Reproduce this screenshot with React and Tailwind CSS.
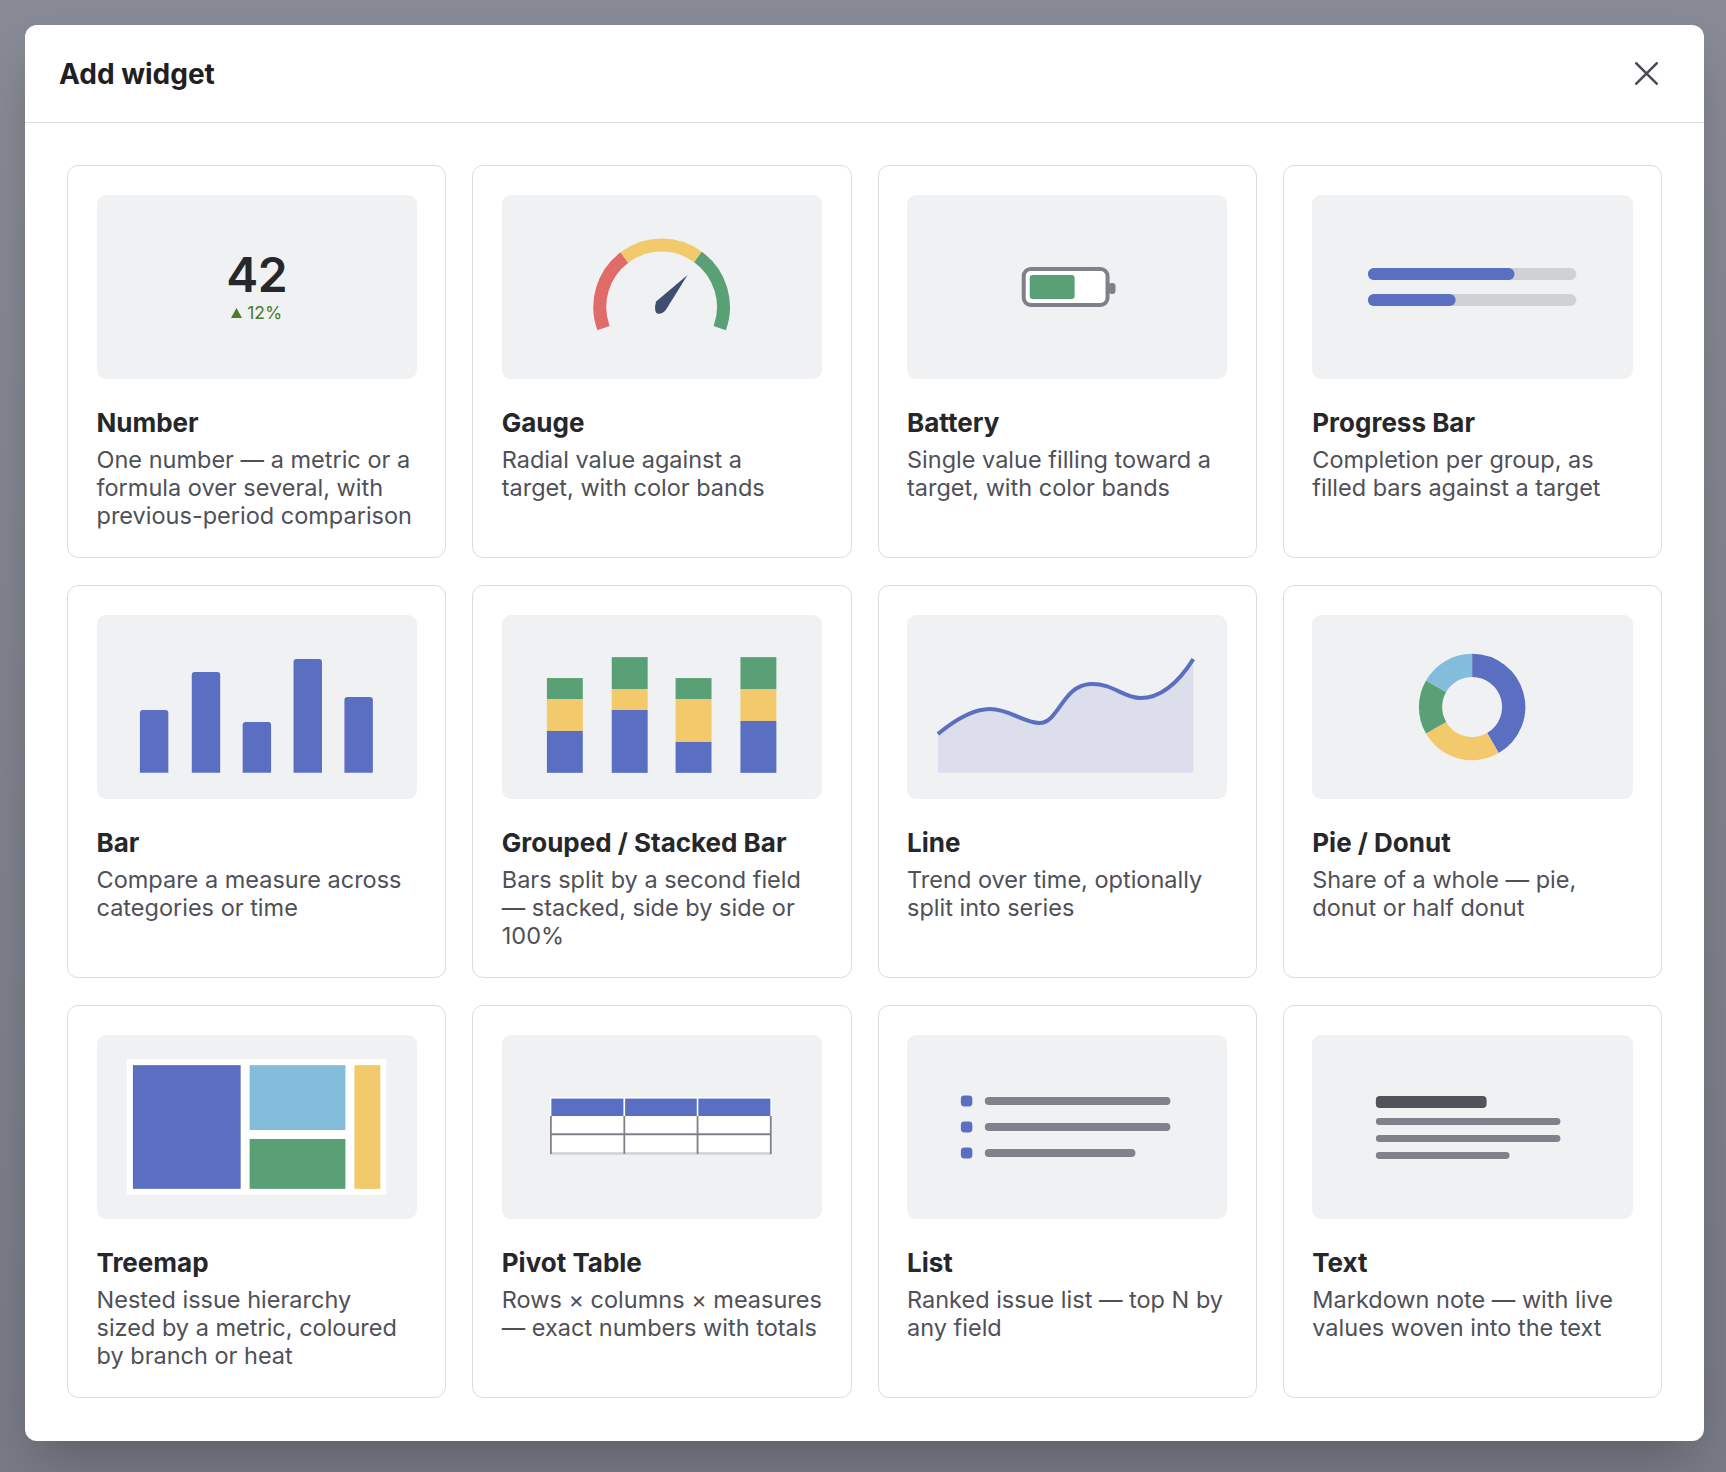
import { useState } from 'react'

const BLUE = '#5a6fc1'
const YELLOW = '#f2c96b'
const GREEN = '#5aa076'
const RED = '#e06c6a'
const SKY = '#84bddb'
const GRAY = '#80818b'

function polar(cx, cy, r, deg) {
  const a = (deg * Math.PI) / 180
  return [cx + r * Math.sin(a), cy - r * Math.cos(a)]
}

function arc(cx, cy, r, from, to) {
  const [x0, y0] = polar(cx, cy, r, from)
  const [x1, y1] = polar(cx, cy, r, to)
  const large = to - from > 180 ? 1 : 0
  return `M${x0.toFixed(2)} ${y0.toFixed(2)} A${r} ${r} 0 ${large} 1 ${x1.toFixed(2)} ${y1.toFixed(2)}`
}

function Canvas({ children }) {
  return (
    <svg viewBox="0 0 321 184" className="h-full w-full">
      {children}
    </svg>
  )
}

function NumberPreview() {
  return (
    <div className="flex h-full flex-col items-center justify-center">
      <div className="text-[48px] font-semibold leading-[48px] tracking-[-0.5px] text-[#26272b]">42</div>
      <div className="mt-[4px] flex items-center gap-[5px] text-[17.5px] leading-[20px] text-[#4e7a2c]">
        <svg width="11" height="10" viewBox="0 0 11 10">
          <path d="M5.5 0 L11 10 L0 10 Z" fill="#4e7a2c" />
        </svg>
        <span>12%</span>
      </div>
    </div>
  )
}

function GaugePreview() {
  const cx = 160
  const cy = 112
  return (
    <Canvas>
      <path d={arc(cx, cy, 62, -110, -37)} stroke={RED} strokeWidth="13" fill="none" />
      <path d={arc(cx, cy, 62, -37, 36)} stroke={YELLOW} strokeWidth="13" fill="none" />
      <path d={arc(cx, cy, 62, 36, 110)} stroke={GREEN} strokeWidth="13" fill="none" />
      <path d="M186 80 L164.5 114.5 Q160 120 155.5 118.5 Q153 117 153.5 111 L154.5 106.5 Z" fill="#3f4e6e" />
    </Canvas>
  )
}

function BatteryPreview() {
  return (
    <Canvas>
      <rect x="117" y="74" width="84" height="36" rx="7" fill="#ffffff" stroke="#7f8089" strokeWidth="4" />
      <rect x="123" y="80" width="45" height="24" rx="3" fill={GREEN} />
      <rect x="202" y="88" width="7" height="11" rx="3" fill="#7f8089" />
    </Canvas>
  )
}

function ProgressPreview() {
  return (
    <Canvas>
      <rect x="56" y="73" width="209" height="12" rx="6" fill="#d0d1d4" />
      <rect x="56" y="73" width="147" height="12" rx="6" fill={BLUE} />
      <rect x="56" y="99" width="209" height="12" rx="6" fill="#d0d1d4" />
      <rect x="56" y="99" width="88" height="12" rx="6" fill={BLUE} />
    </Canvas>
  )
}

const BARS = [
  { x: 43, top: 95 },
  { x: 95, top: 57 },
  { x: 146, top: 107 },
  { x: 197, top: 44 },
  { x: 248, top: 82 },
]

function BarPreview() {
  return (
    <Canvas>
      {BARS.map((b) => (
        <path
          key={b.x}
          d={`M${b.x} 158 L${b.x} ${b.top + 3} Q${b.x} ${b.top} ${b.x + 3} ${b.top} L${b.x + 25.5} ${b.top} Q${b.x + 28.5} ${b.top} ${b.x + 28.5} ${b.top + 3} L${b.x + 28.5} 158 Z`}
          fill={BLUE}
        />
      ))}
    </Canvas>
  )
}

const STACKS = [
  { x: 45, g: 63, y: 84, b: 116 },
  { x: 110, g: 42, y: 74, b: 95 },
  { x: 174, g: 63, y: 84, b: 127 },
  { x: 239, g: 42, y: 74, b: 106 },
]

function StackedPreview() {
  return (
    <Canvas>
      {STACKS.map((s) => (
        <g key={s.x}>
          <rect x={s.x} y={s.g} width="36" height={s.y - s.g} fill={GREEN} />
          <rect x={s.x} y={s.y} width="36" height={s.b - s.y} fill={YELLOW} />
          <rect x={s.x} y={s.b} width="36" height={158 - s.b} fill={BLUE} />
        </g>
      ))}
    </Canvas>
  )
}

const LINE = 'M31 119 C48 105 66 94 83 94 C103 94 117 108 133 108 C152 108 156 70 184 69 C206 68 217 83 234 83 C256 83 273 66 287 44'

function LinePreview() {
  return (
    <Canvas>
      <path d={`${LINE} L287 158 L31 158 Z`} fill="#dcdfeb" />
      <path d={LINE} stroke={BLUE} strokeWidth="4" fill="none" />
    </Canvas>
  )
}

function DonutPreview() {
  const cx = 160.5
  const cy = 92
  const r = 41.7
  return (
    <Canvas>
      <path d={arc(cx, cy, r, 0, 150)} stroke={BLUE} strokeWidth="23.3" fill="none" />
      <path d={arc(cx, cy, r, 150, 240)} stroke={YELLOW} strokeWidth="23.3" fill="none" />
      <path d={arc(cx, cy, r, 240, 300)} stroke={GREEN} strokeWidth="23.3" fill="none" />
      <path d={arc(cx, cy, r, 300, 360)} stroke={SKY} strokeWidth="23.3" fill="none" />
    </Canvas>
  )
}

function TreemapPreview() {
  return (
    <Canvas>
      <rect x="30" y="24" width="260" height="136" fill="#ffffff" />
      <rect x="36" y="30" width="108" height="124" fill={BLUE} />
      <rect x="153" y="30" width="96" height="65" fill={SKY} />
      <rect x="153" y="104" width="96" height="50" fill={GREEN} />
      <rect x="258" y="30" width="26" height="124" fill={YELLOW} />
    </Canvas>
  )
}

function PivotPreview() {
  const cols = [49, 122.6, 196, 269.4]
  return (
    <Canvas>
      <rect x="49" y="81" width="220.4" height="38" fill="#ffffff" />
      <rect x="48" y="62" width="222.4" height="19.5" fill="#ffffff" />
      <rect x="49.5" y="63.5" width="72.2" height="17.5" fill={BLUE} />
      <rect x="123.4" y="63.5" width="71.8" height="17.5" fill={BLUE} />
      <rect x="196.8" y="63.5" width="72.2" height="17.5" fill={BLUE} />
      <line x1="48" y1="118.5" x2="270.4" y2="118.5" stroke="#d6d7da" strokeWidth="3" />
      <line x1="49" y1="99.3" x2="269.4" y2="99.3" stroke="#7f8089" strokeWidth="2" />
      {cols.map((x) => (
        <line key={x} x1={x} y1="81" x2={x} y2="119" stroke="#7f8089" strokeWidth="1.8" />
      ))}
    </Canvas>
  )
}

function ListPreview() {
  const rows = [
    { y: 66, w: 186 },
    { y: 92, w: 186 },
    { y: 118, w: 151 },
  ]
  return (
    <Canvas>
      {rows.map((r) => (
        <g key={r.y}>
          <rect x="54" y={r.y - 5.5} width="11.5" height="11" rx="3.5" fill={BLUE} />
          <rect x="78" y={r.y - 4} width={r.w} height="8" rx="4" fill={GRAY} />
        </g>
      ))}
    </Canvas>
  )
}

function TextPreview() {
  return (
    <Canvas>
      <rect x="64" y="61" width="111" height="12" rx="4" fill="#525359" />
      <rect x="64" y="83" width="185" height="7" rx="3.5" fill={GRAY} />
      <rect x="64" y="100" width="185" height="7" rx="3.5" fill={GRAY} />
      <rect x="64" y="117" width="134" height="7" rx="3.5" fill={GRAY} />
    </Canvas>
  )
}

// descriptions are kept as the lines they break into on the card
const WIDGETS = [
  { id: 'number', title: 'Number', desc: ['One number — a metric or a', 'formula over several, with', 'previous-period comparison'], Preview: NumberPreview },
  { id: 'gauge', title: 'Gauge', desc: ['Radial value against a', 'target, with color bands'], Preview: GaugePreview },
  { id: 'battery', title: 'Battery', desc: ['Single value filling toward a', 'target, with color bands'], Preview: BatteryPreview },
  { id: 'progress', title: 'Progress Bar', desc: ['Completion per group, as', 'filled bars against a target'], Preview: ProgressPreview },
  { id: 'bar', title: 'Bar', desc: ['Compare a measure across', 'categories or time'], Preview: BarPreview },
  { id: 'stacked', title: 'Grouped / Stacked Bar', desc: ['Bars split by a second field', '— stacked, side by side or', '100%'], Preview: StackedPreview },
  { id: 'line', title: 'Line', desc: ['Trend over time, optionally', 'split into series'], Preview: LinePreview },
  { id: 'pie', title: 'Pie / Donut', desc: ['Share of a whole — pie,', 'donut or half donut'], Preview: DonutPreview },
  { id: 'treemap', title: 'Treemap', desc: ['Nested issue hierarchy', 'sized by a metric, coloured', 'by branch or heat'], Preview: TreemapPreview },
  { id: 'pivot', title: 'Pivot Table', desc: ['Rows × columns × measures', '— exact numbers with totals'], Preview: PivotPreview },
  { id: 'list', title: 'List', desc: ['Ranked issue list — top N by', 'any field'], Preview: ListPreview },
  { id: 'text', title: 'Text', desc: ['Markdown note — with live', 'values woven into the text'], Preview: TextPreview },
]

function WidgetCard({ widget, onPick }) {
  const { Preview } = widget
  return (
    <button
      type="button"
      onClick={() => onPick(widget.id)}
      className="flex h-[393px] flex-col overflow-visible rounded-[11px] border-[1.5px] border-[#dcdcdf] bg-white p-[28.5px] text-left"
    >
      <div className="h-[184px] w-full shrink-0 rounded-[9px] bg-[#f0f1f3]">
        <Preview />
      </div>
      <div className="mt-[28px] shrink-0 text-[26px] font-bold leading-[32px] text-[#26272b]">{widget.title}</div>
      <p className="mt-[7px] shrink-0 text-[23.5px] leading-[28px] text-[#4f5058]">
        {widget.desc.map((line) => (
          <span key={line} className="block whitespace-nowrap">
            {line}
          </span>
        ))}
      </p>
    </button>
  )
}

export default function App() {
  const [picked, setPicked] = useState(null)

  return (
    <div className="h-[1472px] w-full bg-gradient-to-b from-[#888a95] to-[#787a86] pb-[31px] pl-[25px] pr-[22px] pt-[25px] font-[Inter,sans-serif]">
      <div className="rounded-[12px] bg-white shadow-2xl" data-picked={picked || ''}>
        <div className="flex h-[98px] items-center justify-between border-b-[1.5px] border-[#dddde0] pl-[34px] pr-[46px]">
          <h2 className="text-[28px] font-bold text-[#1f2024]">Add widget</h2>
          <button type="button" aria-label="Close" className="text-[#4a4b52]">
            <svg width="23" height="23" viewBox="0 0 23 23">
              <path d="M1.3 1.3 L21.7 21.7 M21.7 1.3 L1.3 21.7" stroke="currentColor" strokeWidth="2.6" strokeLinecap="round" />
            </svg>
          </button>
        </div>
        <div className="grid grid-cols-4 gap-x-[26px] gap-y-[27px] px-[42px] pb-[43px] pt-[42px]">
          {WIDGETS.map((w) => (
            <WidgetCard key={w.id} widget={w} onPick={setPicked} />
          ))}
        </div>
      </div>
    </div>
  )
}
